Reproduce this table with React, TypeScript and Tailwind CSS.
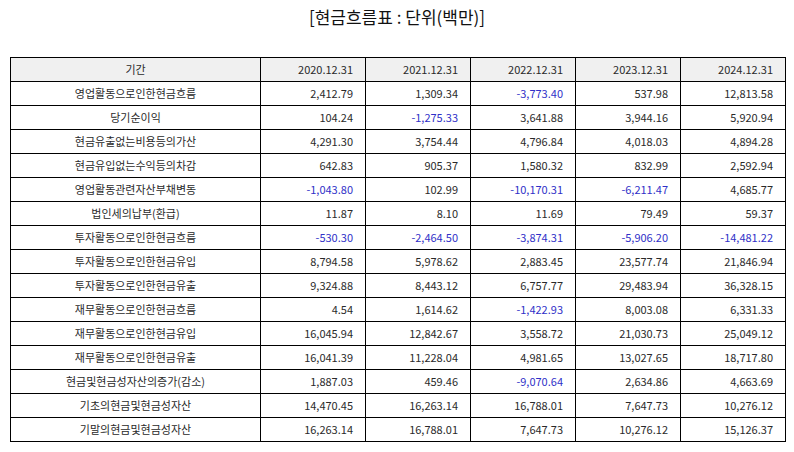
import React from "react";

const rows: [string, string[]][] = [
  ["영업활동으로인한현금흐름", ["2,412.79", "1,309.34", "-3,773.40", "537.98", "12,813.58"]],
  ["당기순이익", ["104.24", "-1,275.33", "3,641.88", "3,944.16", "5,920.94"]],
  ["현금유출없는비용등의가산", ["4,291.30", "3,754.44", "4,796.84", "4,018.03", "4,894.28"]],
  ["현금유입없는수익등의차감", ["642.83", "905.37", "1,580.32", "832.99", "2,592.94"]],
  ["영업활동관련자산부채변동", ["-1,043.80", "102.99", "-10,170.31", "-6,211.47", "4,685.77"]],
  ["법인세의납부(환급)", ["11.87", "8.10", "11.69", "79.49", "59.37"]],
  ["투자활동으로인한현금흐름", ["-530.30", "-2,464.50", "-3,874.31", "-5,906.20", "-14,481.22"]],
  ["투자활동으로인한현금유입", ["8,794.58", "5,978.62", "2,883.45", "23,577.74", "21,846.94"]],
  ["투자활동으로인한현금유출", ["9,324.88", "8,443.12", "6,757.77", "29,483.94", "36,328.15"]],
  ["재무활동으로인한현금흐름", ["4.54", "1,614.62", "-1,422.93", "8,003.08", "6,331.33"]],
  ["재무활동으로인한현금유입", ["16,045.94", "12,842.67", "3,558.72", "21,030.73", "25,049.12"]],
  ["재무활동으로인한현금유출", ["16,041.39", "11,228.04", "4,981.65", "13,027.65", "18,717.80"]],
  ["현금및현금성자산의증가(감소)", ["1,887.03", "459.46", "-9,070.64", "2,634.86", "4,663.69"]],
  ["기초의현금및현금성자산", ["14,470.45", "16,263.14", "16,788.01", "7,647.73", "10,276.12"]],
  ["기말의현금및현금성자산", ["16,263.14", "16,788.01", "7,647.73", "10,276.12", "15,126.37"]],
];

const years = ["2020.12.31", "2021.12.31", "2022.12.31", "2023.12.31", "2024.12.31"];

export default function App() {
  return (
    <div
      className="w-[794px] h-[452px] bg-white text-[#2a2a2a]"
      style={{ fontFamily: '"Noto Sans CJK KR", "Noto Sans", sans-serif' }}
    >
      <div className="pt-[4px] h-[57px] text-center text-[17px] leading-[25px] text-[#111]">
        [현금흐름표 : 단위(백만)]
      </div>
      <table className="ml-[10px] w-[775px] border-collapse table-fixed text-[11px]">
        <colgroup>
          <col className="w-[250px]" />
          <col className="w-[105px]" />
          <col className="w-[105px]" />
          <col className="w-[105px]" />
          <col className="w-[105px]" />
          <col className="w-[105px]" />
        </colgroup>
        <thead>
          <tr className="h-[24px] bg-[#f0f0f0]">
            <th className="border border-black font-normal text-center p-0">기간</th>
            {years.map((y) => (
              <th key={y} className="border border-black font-normal text-right pr-[12px] p-0">
                {y}
              </th>
            ))}
          </tr>
        </thead>
        <tbody>
          {rows.map(([label, vals]) => (
            <tr key={label} className="h-[24px]">
              <td className="border border-black text-center p-0">{label}</td>
              {vals.map((v, i) => (
                <td
                  key={i}
                  className={
                    "border border-black text-right pr-[12px] p-0 " +
                    (v.startsWith("-") ? "text-[#3030c8]" : "")
                  }
                >
                  {v}
                </td>
              ))}
            </tr>
          ))}
        </tbody>
      </table>
    </div>
  );
}
